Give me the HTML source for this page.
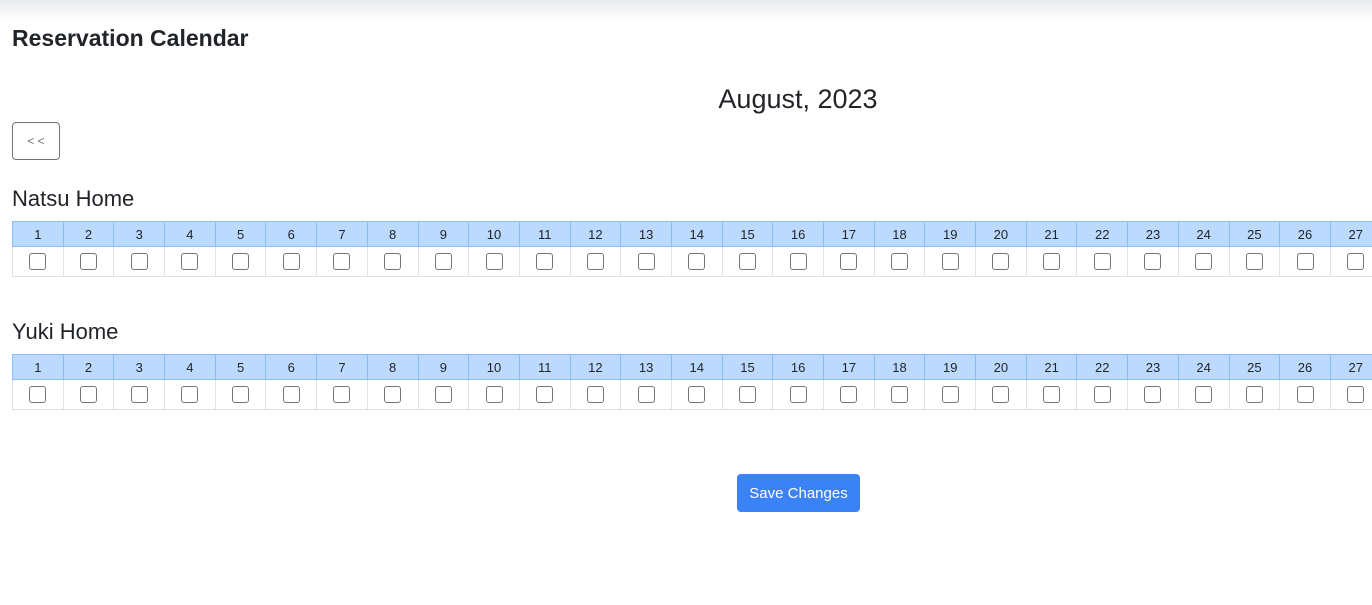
<!DOCTYPE html>
<html><head><style>
body{margin:0;width:1372px;height:605px;overflow:hidden;background:#fff;font-family:"Liberation Sans","DejaVu Sans",sans-serif;color:#212529;position:relative}
.shadow{position:absolute;left:0;top:0;width:1372px;height:20px;background:linear-gradient(#e9eaee,#fff)}
h1{position:absolute;left:12px;top:25px;margin:0;font-size:23px;font-weight:bold}
.month{position:absolute;left:0;width:1596px;top:84px;text-align:center;font-size:27px;margin:0}
.prev{position:absolute;left:12px;top:122px;width:48px;height:38px;border:1px solid #6c757d;border-radius:4px;box-sizing:border-box;font-size:12px;color:#6c757d;text-align:center;line-height:36px}
h2{position:absolute;left:12px;margin:0;font-size:22px;font-weight:normal}
.wrap{position:absolute;left:12px;width:1360px;height:60px;overflow:hidden}
table{border-collapse:collapse;table-layout:fixed;width:1572px}
td{width:50.7px;padding:0;text-align:center;border:1px solid #dee2e6;font-size:13px;box-sizing:border-box}
tr.h td{background:#bcdafd;border-color:#8bbcf8;height:25px}
tr.b td{height:30px}
.cb{display:inline-block;width:17px;height:17px;border:1px solid #767676;border-radius:3px;vertical-align:middle;box-sizing:border-box}
.save{position:absolute;left:737px;top:474px;width:123px;height:38px;background:#3b82f6;color:#fff;border-radius:4px;font-size:15px;text-align:center;line-height:40px}
</style></head><body>
<div class="shadow"></div>
<h1>Reservation Calendar</h1>
<div class="month">August, 2023</div>
<div class="prev">&lt; &lt;</div>
<h2 style="top:186px">Natsu Home</h2>
<div class="wrap" style="top:221px"><table id="t1"></table></div>
<h2 style="top:319px">Yuki Home</h2>
<div class="wrap" style="top:354px"><table id="t2"></table></div>
<div class="save">Save Changes</div>
<script>
for(const id of ["t1","t2"]){let h='<tr class="h">',b='<tr class="b">';for(let i=1;i<=31;i++){h+='<td>'+i+'</td>';b+='<td><span class="cb"></span></td>';}document.getElementById(id).innerHTML=h+'</tr>'+b+'</tr>';}
</script>
</body></html>
